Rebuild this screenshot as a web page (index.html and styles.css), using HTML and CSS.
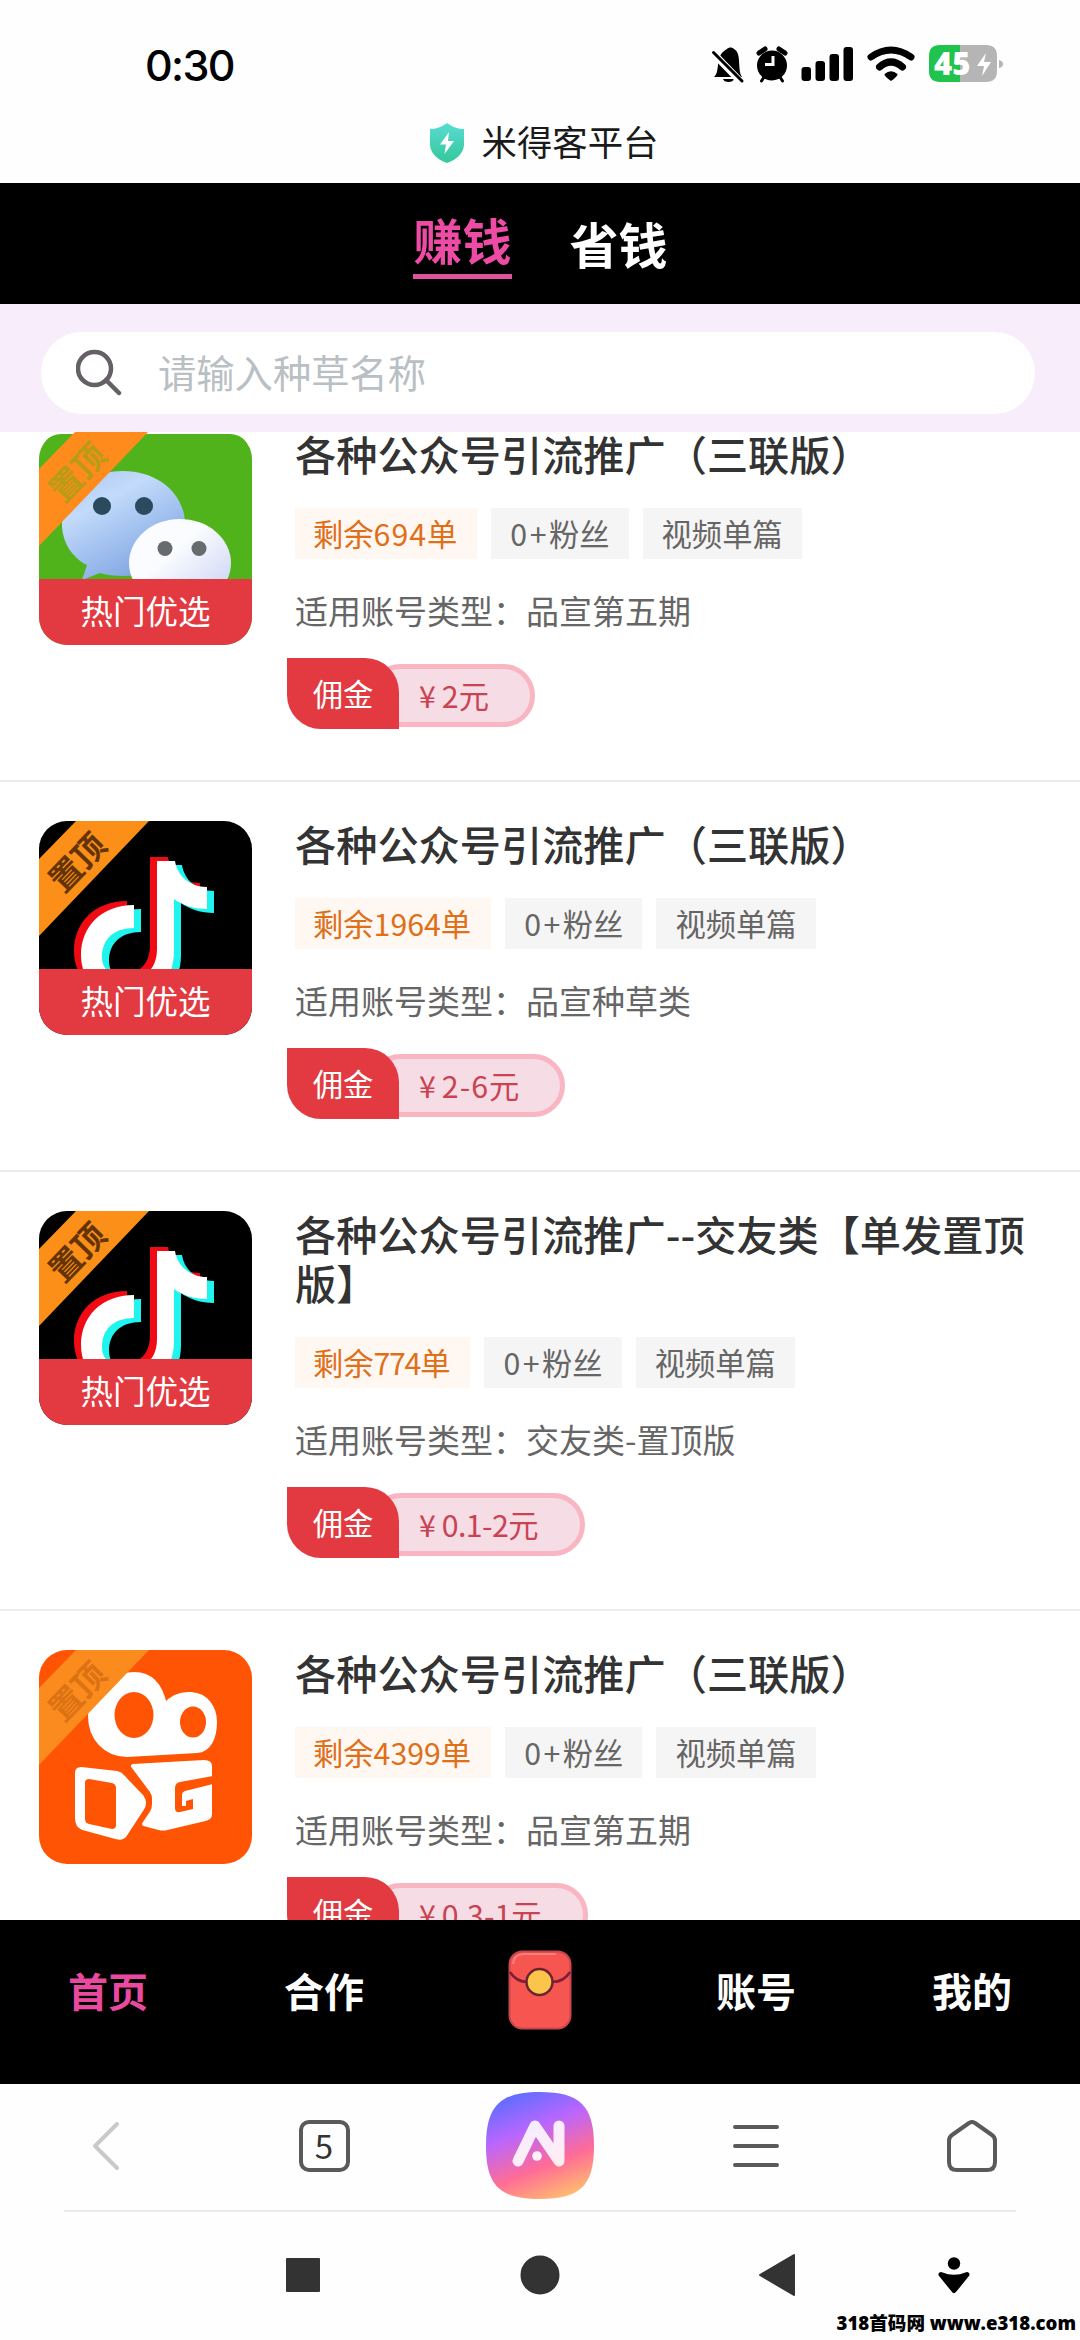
FILE: index.html
```html
<!DOCTYPE html>
<html lang="zh-CN">
<head>
<meta charset="utf-8">
<title>米得客平台</title>
<link rel="stylesheet" href="styles.css">
</head>
<body>
<svg class="defs" width="0" height="0" aria-hidden="true">
  <defs>
    <path id="note" d="M118 40H136C138 54 150 66 168 66V88C155 88 143 84 135 78V130C135 160 115 180 88 180C62 180 42 160 42 134C42 106 62 84 95 84V107C75 107 63 118 63 136C63 150 75 158 88 158C108 158 118 146 118 128Z"/>
    <symbol id="douyin" viewBox="0 0 213 214">
      <rect width="213" height="214" fill="#000"/>
      <use href="#note" x="-7" y="-4" fill="#f00a14"/>
      <use href="#note" x="7" y="4" fill="#1ff4ee"/>
      <use href="#note" fill="#fff"/>
    </symbol>
    <linearGradient id="blue" x1="0" y1="0" x2="0.6" y2="1"><stop offset="0" stop-color="#a9c6f0"/><stop offset="0.35" stop-color="#c3dbfb"/><stop offset="1" stop-color="#7ea4e2"/></linearGradient>
    <linearGradient id="pale" x1="0" y1="0" x2="1" y2="1"><stop offset="0.4" stop-color="#fbfcff"/><stop offset="1" stop-color="#c3cdf2"/></linearGradient>
    <linearGradient id="shield" x1="0" y1="0" x2="0" y2="1"><stop offset="0" stop-color="#58dcd0"/><stop offset="1" stop-color="#34c79c"/></linearGradient>
    <linearGradient id="ai" x1="0.25" y1="0" x2="0.65" y2="1"><stop offset="0" stop-color="#5b6dff"/><stop offset="0.35" stop-color="#b866ff"/><stop offset="0.7" stop-color="#ff6c96"/><stop offset="1" stop-color="#ffb871"/></linearGradient>
  </defs>
</svg>

<header class="status">
  <time class="clock">0:30</time>
  <svg class="status-icons" width="300" height="50" viewBox="705 40 300 50">
    <path d="M714 77C719 73 717 62 720 56C722 52 725 50 727 49C729 47 732 47 734 49C742 53 737 70 742 77Z"/>
    <path d="M723 79H734Q733 82 728.500 82Q724 82 723 79Z"/>
    <path d="M711 51L742 83" stroke="#fff" stroke-width="7"/>
    <path d="M713.500 52.500L742 81" stroke="#000" stroke-width="3" stroke-linecap="round"/>
    <circle cx="772" cy="65.500" r="15"/>
    <path d="M759 53L765 49M779 49L785 53" stroke="#000" stroke-width="5" stroke-linecap="round"/>
    <path d="M764 77L761.500 81M780 77L782.500 81" stroke="#000" stroke-width="3" stroke-linecap="round"/>
    <path d="M773 56V64.500H765" fill="none" stroke="#fff" stroke-width="3"/>
    <rect x="801.500" y="67" width="9.500" height="14" rx="3"/><rect x="815.500" y="61" width="9.500" height="20" rx="3"/><rect x="829.500" y="54" width="9.500" height="27" rx="3"/><rect x="843.500" y="47" width="9.500" height="34" rx="3"/>
    <path d="M871 57Q891 43 911 57M879.500 67Q891 57 902.500 67" fill="none" stroke="#000" stroke-width="7" stroke-linecap="round"/>
    <path d="M884.500 74Q891 68.500 897.500 74Q898 76 891 81Q884 76 884.500 74Z"/>
    <path d="M940 45H960V82H940Q929 82 929 71V56Q929 45 940 45Z" fill="#20c44c"/>
    <path d="M960 45H986Q997 45 997 56V71Q997 82 986 82H960Z" fill="#b5b5b5"/>
    <path d="M999 60Q1003 61 1003 64Q1003 67 999 68Z" fill="#b5b5b5"/>
    <path d="M986 53L977 66H984L982 76L991 62H984Z" fill="#fff"/>
    <text class="battery-text" x="934" y="75">45</text>
  </svg>
</header>

<div class="site">
  <svg width="36" height="42" viewBox="0 0 36 42"><path d="M18 1Q26 7 35 7V23Q34 35 18 41Q2 35 1 23V7Q10 7 18 1Z" fill="url(#shield)"/><path d="M20 10L11 22.500H17L15.500 32L25 19H19Z" fill="#fff"/></svg>
  <span>米得客平台</span>
</div>

<nav class="tabs">
  <a class="tab tab-on">赚钱</a>
  <a class="tab">省钱</a>
</nav>

<div class="search">
  <div class="search-box">
    <svg width="46" height="48" viewBox="0 0 46 48" fill="none" stroke="#655f66" stroke-width="4.500" stroke-linecap="round"><circle cx="18.500" cy="19.500" r="16.500"/><path d="M30 31L43 44"/></svg>
    <span>请输入种草名称</span>
  </div>
</div>

<main class="list">
  <article class="item">
    <div class="thumb thumb-wechat">
      <svg width="213" height="214" viewBox="0 0 213 214">
        <rect y="3" width="213" height="211" rx="22" fill="#50b31c"/>
        <path d="M84 40C120 40 146 64 146 93C146 122 118 145 84 145Q70 145 61 142L43 149L48 134C32 126 23 110 23 93C23 64 48 40 84 40Z" fill="url(#blue)"/>
        <circle cx="63" cy="75" r="9" fill="#2b4a5e"/><circle cx="105" cy="75" r="9" fill="#2b4a5e"/>
        <ellipse cx="141" cy="132" rx="51" ry="44" fill="url(#pale)"/>
        <circle cx="126" cy="117.500" r="7.500" fill="#666b6e"/><circle cx="160" cy="117.500" r="7.500" fill="#666b6e"/>
        <path d="M37 0H110L0 115V38Z" fill="#ff8b1d"/>
      </svg>
      <span class="pin pin-olive">置顶</span>
      <span class="hot">热门优选</span>
    </div>
    <div class="info">
      <h2 class="title">各种公众号引流推广（三联版）</h2>
      <div class="tags"><span class="tag tag-left">剩余<b class="wide">694</b>单</span><span class="tag"><b class="fans">0+</b>粉丝</span><span class="tag">视频单篇</span></div>
      <p class="kind">适用账号类型：品宣第五期</p>
      <div class="fee"><span class="fee-label">佣金</span><span class="fee-value"><i>¥</i>2元</span></div>
    </div>
  </article>

  <article class="item">
    <div class="thumb">
      <svg width="213" height="214"><use href="#douyin"/><path d="M37 0H110L0 115V38Z" fill="#fb8f17"/></svg>
      <span class="pin">置顶</span>
      <span class="hot">热门优选</span>
    </div>
    <div class="info">
      <h2 class="title">各种公众号引流推广（三联版）</h2>
      <div class="tags"><span class="tag tag-left">剩余1964单</span><span class="tag"><b class="fans">0+</b>粉丝</span><span class="tag">视频单篇</span></div>
      <p class="kind">适用账号类型：品宣种草类</p>
      <div class="fee"><span class="fee-label">佣金</span><span class="fee-value"><i>¥</i><b class="wide">2-6</b>元</span></div>
    </div>
  </article>

  <article class="item">
    <div class="thumb">
      <svg width="213" height="214"><use href="#douyin"/><path d="M37 0H110L0 115V38Z" fill="#fb8f17"/></svg>
      <span class="pin">置顶</span>
      <span class="hot">热门优选</span>
    </div>
    <div class="info">
      <h2 class="title">各种公众号引流推广--交友类【单发置顶版】</h2>
      <div class="tags"><span class="tag tag-left">剩余<b class="narrow">774</b>单</span><span class="tag"><b class="fans">0+</b>粉丝</span><span class="tag">视频单篇</span></div>
      <p class="kind">适用账号类型：交友类-置顶版</p>
      <div class="fee"><span class="fee-label">佣金</span><span class="fee-value"><i>¥</i><b class="tight">0.1-2</b>元</span></div>
    </div>
  </article>

  <article class="item">
    <div class="thumb">
      <svg width="213" height="214" viewBox="0 0 213 214">
        <rect width="213" height="214" fill="#ff5404"/>
        <g fill="#fff" stroke="#fff" stroke-width="4" stroke-linejoin="round">
          <path d="M95 24C112 24 122 36 126 55Q136 43 152 44C168 45 176 58 176 72C176 88 170 100 158 101L88 105C66 105 51 88 51 66C51 40 72 24 95 24Z"/>
          <path d="M42 119L78 123Q82 124 84 127L103 147Q107 153 103 159L86 185Q83 189 77 187L44 178Q38 176 38 168V123Q38 119 42 119Z"/>
          <path d="M94 116L165 112Q171 112 171 116V164Q171 168 166 169L128 178Q124 179 120 178L105 174L113 162Q115 159 115 154V148Q115 144 112 140Z"/>
        </g>
        <g fill="#ff5404">
          <ellipse cx="95" cy="65" rx="19.500" ry="23"/><ellipse cx="154" cy="72" rx="13" ry="15.500"/>
          <path d="M50 129L73 133Q77 134 77 138V175Q77 179 73 179L50 174Q46 173 46 169V133Q46 129 50 129Z"/>
          <path d="M174 126L141 132Q136 133 136 138V158Q136 163 141 162L154 159V149L147 151V156H143V145Q143 142 146 141L174 134Z"/>
        </g>
        <path d="M37 0H110L0 115V38Z" fill="#fb8b1c"/>
      </svg>
      <span class="pin pin-orange">置顶</span>
    </div>
    <div class="info">
      <h2 class="title">各种公众号引流推广（三联版）</h2>
      <div class="tags"><span class="tag tag-left">剩余4399单</span><span class="tag"><b class="fans">0+</b>粉丝</span><span class="tag">视频单篇</span></div>
      <p class="kind">适用账号类型：品宣第五期</p>
      <div class="fee"><span class="fee-label">佣金</span><span class="fee-value"><i>¥</i>0.3-1元</span></div>
    </div>
  </article>
</main>

<nav class="menu">
  <a class="menu-on">首页</a>
  <a>合作</a>
  <a><svg width="64" height="80" viewBox="0 0 64 80"><rect x="1.500" y="1.500" width="61" height="77" rx="13" fill="#f65550" stroke="#c9464c" stroke-width="2"/><path d="M2 22Q8 32 20 32H44Q56 32 62 22" fill="none" stroke="#7d1f35" stroke-width="2.500"/><path d="M5 14Q6 4 16 4H48" fill="none" stroke="#fa8079" stroke-width="2"/><circle cx="31.500" cy="32" r="13" fill="#fbc54b" stroke="#6e2430" stroke-width="2.500"/></svg></a>
  <a>账号</a>
  <a>我的</a>
</nav>

<nav class="browser">
  <a class="back"><svg width="28" height="50" viewBox="0 0 28 50" fill="none" stroke="#c9c9c9" stroke-width="4" stroke-linecap="round" stroke-linejoin="round"><path d="M25 3L3 25L25 47"/></svg></a>
  <a><span class="count">5</span></a>
  <a><svg width="108" height="108" viewBox="0 0 108 108"><path d="M54 0C94 0 108 14 108 54C108 94 94 107 54 107C14 107 0 94 0 54C0 14 14 0 54 0Z" fill="url(#ai)"/><path d="M32 69L49 34L73 69V34" fill="none" stroke="#fff" stroke-opacity="0.880" stroke-width="11" stroke-linecap="round" stroke-linejoin="round"/><circle cx="51" cy="64" r="4.800" fill="#fff" fill-opacity="0.900"/></svg></a>
  <a><svg width="46" height="44" viewBox="0 0 46 44" stroke="#5a5a5a" stroke-width="4" stroke-linecap="round"><path d="M2 3H44M2 22H44M2 41H44"/></svg></a>
  <a><svg width="50" height="52" viewBox="0 0 50 52" fill="none" stroke="#5a5a5a" stroke-width="4" stroke-linejoin="round"><path d="M22 3Q25 1 28 3L45 15Q48 17 48 21V42Q48 50 40 50H10Q2 50 2 42V21Q2 17 5 15Z"/></svg></a>
</nav>

<footer class="system">
  <svg class="keys" width="1080" height="130" viewBox="0 2210 1080 130">
    <g fill="#333" stroke="#333" stroke-width="2" stroke-linejoin="round"><rect x="287" y="2259" width="32" height="32"/><circle cx="540" cy="2275" r="18.500"/><path d="M794 2255V2295L760 2275Z"/></g>
    <circle cx="954" cy="2263.500" r="6.200"/><path d="M941 2274.500Q954 2280 967 2274.500L954 2290.500Z" stroke="#000" stroke-width="5" stroke-linejoin="round"/>
  </svg>
  <span class="mark">318首码网 www.e318.com</span>
</footer>
</body>
</html>
```
FILE: styles.css
```css
* { box-sizing: border-box; }

body {
  margin: 0;
  width: 1080px;
  height: 2340px;
  overflow: hidden;
  display: flex;
  flex-direction: column;
  background: #fefefe;
  color: #333;
  font-family: "Noto Sans CJK SC", sans-serif;
}

svg { display: block; flex: none; }
.defs { position: absolute; }

.status {
  height: 105px;
  padding: 40px 75px 0 145px;
  display: flex;
  justify-content: space-between;
}
.clock { font: 500 43px/50px Inter, sans-serif; letter-spacing: -1.7px; color: #000; }
.battery-text { font: 800 31px "Open Sans", sans-serif; fill: #fff; }

.site {
  height: 78px;
  padding: 0 0 2px 7px;
  display: flex;
  align-items: center;
  justify-content: center;
  gap: 17px;
  font-size: 35.4px;
  line-height: 50px;
  color: #1a1a1a;
}
.site span { margin-top: -4px; }

.tabs {
  height: 121px;
  background: #000;
  display: flex;
  align-items: flex-start;
  justify-content: center;
  gap: 58px;
  padding: 29px 0 0 1px;
}
.tab { height: 67px; font-size: 49px; line-height: 62px; font-weight: 700; color: #fff; }
.tab-on { color: #ee4ba6; line-height: 54px; border-bottom: 5px solid #df539f; }

.search { height: 128px; padding: 28px 45px 18px 41px; background: #f8edfb; }
.search-box {
  height: 82px;
  border-radius: 41px;
  background: #fff;
  padding-left: 35px;
  display: flex;
  align-items: center;
  gap: 36px;
  font-size: 38.3px;
  color: #b9bfc3;
}
.search-box span { padding-bottom: 4px; }

.list { height: 1488px; overflow: hidden; background: #fff; }
.item {
  display: flex;
  gap: 42px;
  padding: 39px 38px 51px 39px;
  border-bottom: 2px solid #ececec;
}
.item:first-child { margin-top: -40px; }

.thumb { position: relative; flex: none; width: 213px; height: 214px; border-radius: 28px; overflow: hidden; }
.pin {
  position: absolute;
  left: 4px;
  top: 22px;
  width: 66px;
  text-align: center;
  font-size: 32.5px;
  line-height: 36px;
  font-weight: 700;
  color: #643306;
  transform: rotate(-46deg);
}
.pin-olive { color: #b99b16; }
.pin-orange { color: #dd7214; }
.hot {
  position: absolute;
  left: 0;
  right: 0;
  bottom: 0;
  height: 66px;
  background: #e23a40;
  color: #fff;
  text-align: center;
  font-size: 32.5px;
  line-height: 61px;
}

.info { flex: 1; padding-left: 1px; }
.title { margin: -2px 0 0; font-size: 41.2px; line-height: 49px; font-weight: 500; color: #333; }
.tags { display: flex; gap: 14px; margin-top: 30px; }
.tag { height: 51px; padding: 0 19px; background: #f6f5f5; color: #666; font-size: 30.3px; line-height: 51px; }
.tag-left { background: #fff8f2; color: #e06f1a; padding: 0 20px 0 18px; }
.info b { font-weight: 400; }
.wide { letter-spacing: 1px; }
.narrow { letter-spacing: -1.3px; }
.tight { letter-spacing: -0.6px; }
.fans { letter-spacing: 2.5px; }
.kind { margin: 26px 0 0; font-size: 33px; line-height: 50px; color: #666; }

.fee { display: flex; align-items: center; margin: 23px 0 0 -8px; height: 71px; }
.fee-label {
  z-index: 1;
  width: 112px;
  height: 71px;
  background: #e23a40;
  border-radius: 0 34px 0 34px;
  color: #fff;
  text-align: center;
  font-size: 30.3px;
  line-height: 71px;
}
.fee-value {
  height: 63px;
  margin: 4px 0 0 -30px;
  padding: 0 41px 0 45px;
  border: 5px solid #f9b5c2;
  border-radius: 32px;
  background: #f6dce4;
  color: #c94352;
  font-size: 30.3px;
  line-height: 52px;
}
.fee-value i { font-style: normal; margin-right: 6px; }

.menu {
  height: 164px;
  padding-bottom: 24px;
  background: #000;
  display: grid;
  grid-template-columns: repeat(5, 1fr);
  align-items: center;
  justify-items: center;
  color: #fff;
  font-size: 40px;
  font-weight: 700;
}
.menu-on { color: #e9499f; }

.browser {
  height: 127px;
  margin-bottom: -1px;
  padding-bottom: 4px;
  display: grid;
  grid-template-columns: repeat(5, 216px);
  align-items: center;
  justify-items: center;
}
.back { padding-right: 4px; }
.count {
  display: block;
  width: 51px;
  height: 52px;
  border: 4px solid #5a5a5a;
  border-radius: 10px;
  color: #333;
  text-align: center;
  font: 400 33px/43px "Noto Sans CJK SC", sans-serif;
}

.system { height: 130px; position: relative; }
.system::before { content: ""; display: block; height: 2px; margin: 0 64px -2px; background: #ebebeb; }
.mark {
  position: absolute;
  right: 4px;
  bottom: 3px;
  font: 800 18.6px/28px "Open Sans", "Noto Sans CJK SC", sans-serif;
  color: #000;
  white-space: nowrap;
}
```
